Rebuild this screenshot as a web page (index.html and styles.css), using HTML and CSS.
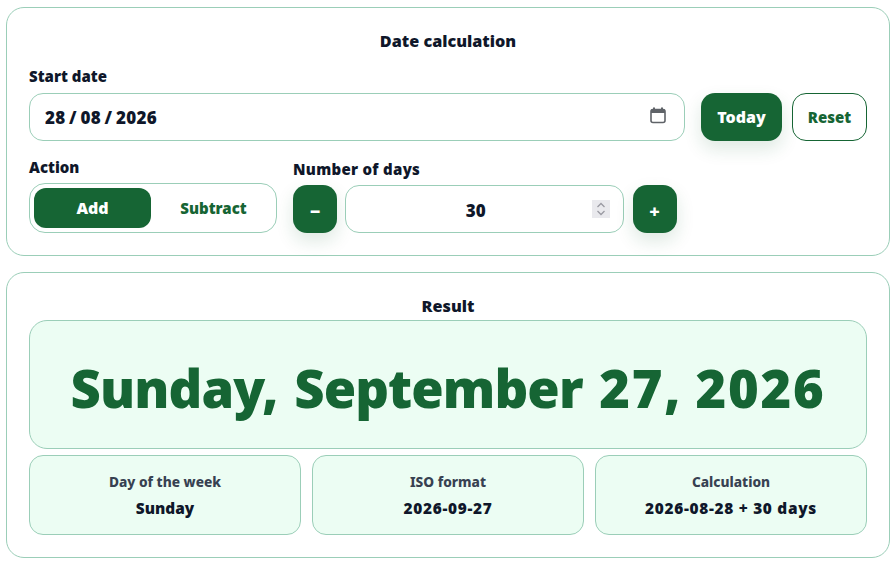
FILE: index.html
```html
<!DOCTYPE html>
<html lang="en">
<head>
    <meta charset="UTF-8">
    <title>Date calculation</title>
    <link rel="stylesheet" href="styles.css">
</head>
<body>
    <section class="card">
        <h2>Date calculation</h2>
        <label class="field-label">Start date</label>
        <div class="date-row">
            <div class="input date-input">
                <input class="plain date-text" type="text" value="28 / 08 / 2026" readonly>
                <svg class="cal" width="16" height="17" viewBox="0 0 16 17">
                    <path d="M4 0.5v3M12 0.5v3" stroke="#5f6368" stroke-width="2" fill="none"/>
                    <rect x="1" y="2.5" width="14" height="13" rx="2" fill="none" stroke="#5f6368" stroke-width="1.6"/>
                    <rect x="1" y="2.5" width="14" height="3.5" fill="#5f6368"/>
                </svg>
            </div>
            <button class="btn today">Today</button>
            <button class="btn reset">Reset</button>
        </div>
        <div class="calc-row">
            <div class="action">
                <label class="field-label">Action</label>
                <div class="segment">
                    <button class="seg on">Add</button>
                    <button class="seg">Subtract</button>
                </div>
            </div>
            <div class="days">
                <label class="field-label days-label">Number of days</label>
                <div class="stepper">
                    <button class="btn step">&minus;</button>
                    <div class="input num-input">
                        <input class="plain center" type="text" value="30" readonly>
                        <span class="spin">
                            <svg width="18" height="18" viewBox="0 0 18 18">
                                <path d="M5.5 7l3.5-3.5 3.5 3.5M5.5 11l3.5 3.5 3.5-3.5" stroke="#9a9aa2" stroke-width="1.3" fill="none"/>
                            </svg>
                        </span>
                    </div>
                    <button class="btn step">+</button>
                </div>
            </div>
        </div>
    </section>

    <section class="card result">
        <h2>Result</h2>
        <div class="big-date"><span>Sunday, September <span class="digits">27, 2026</span></span></div>
        <div class="tiles">
            <div class="tile">
                <div class="tile-label">Day of the week</div>
                <div class="tile-value">Sunday</div>
            </div>
            <div class="tile">
                <div class="tile-label">ISO format</div>
                <div class="tile-value digits-small">2026-09-27</div>
            </div>
            <div class="tile">
                <div class="tile-label">Calculation</div>
                <div class="tile-value digits-small">2026-08-28 + 30 days</div>
            </div>
        </div>
    </section>
</body>
</html>
```

FILE: styles.css
```css
* {
    box-sizing: border-box;
}
body {
    margin: 0;
    padding: 7px 5px 6px 6px;
    background: #fff;
    color: #0f172a;
    font-family: "Noto Sans", sans-serif;
    font-weight: 900;
}
.card {
    background: #fff;
    border: 1px solid #9bceb8;
    border-radius: 18px;
    padding: 22px;
    height: 249px;
}
.result {
    margin-top: 16px;
    height: 286px;
}
h2 {
    margin: 0;
    font-size: 16.2px;
    line-height: 22px;
    font-weight: 900;
    text-align: center;
}
.field-label {
    display: block;
    font-size: 15px;
    line-height: 20px;
}
.days-label {
    letter-spacing: 0.3px;
}
.card > .field-label {
    margin-top: 14px;
    margin-bottom: 7px;
}
.date-row {
    display: flex;
}
.input {
    display: flex;
    align-items: center;
    height: 48px;
    background: #fff;
    border: 1px solid #9bceb8;
    border-radius: 14px;
}
.date-input {
    flex: 1;
    padding: 0 18px 0 15px;
}
.plain {
    flex: 1;
    width: 0;
    min-width: 0;
    border: none;
    outline: none;
    background: none;
    padding: 0;
    color: #0f172a;
    font: inherit;
    font-size: 17px;
}
.date-text {
    word-spacing: -1px;
    letter-spacing: 0.25px;
}
.center {
    text-align: center;
}
.cal {
    margin-bottom: 4px;
}
.btn {
    height: 48px;
    border: none;
    border-radius: 14px;
    background: #166534;
    color: #fff;
    font: inherit;
    font-size: 16px;
    box-shadow: 0 8px 18px rgba(22, 101, 52, 0.14);
}
.today {
    width: 81px;
    margin-left: 16px;
}
.reset {
    width: 75px;
    margin-left: 10px;
    background: #fff;
    border: 1px solid #166534;
    color: #166534;
    font-size: 15px;
    box-shadow: none;
}
.calc-row {
    display: flex;
    align-items: flex-end;
    gap: 16px;
    margin-top: 16px;
}
.action {
    width: 248px;
}
.action .field-label {
    margin-bottom: 6px;
}
.days .field-label {
    margin-bottom: 6px;
}
.segment {
    display: flex;
    gap: 4px;
    height: 50px;
    padding: 4px;
    border: 1px solid #9bceb8;
    border-radius: 16px;
}
.seg {
    flex: 1;
    border: none;
    border-radius: 12px;
    background: none;
    color: #166534;
    font: inherit;
    font-size: 15px;
}
.seg.on {
    background: #166534;
    color: #fff;
    font-size: 16px;
}
.stepper {
    display: flex;
    gap: 8.4px;
    width: 383.6px;
}
.step {
    width: 44px;
    flex: none;
    padding-top: 4px;
    font-size: 18px;
}
.num-input {
    flex: 1;
    min-width: 0;
    padding: 0 13px 0 0;
}
.num-input .plain {
    padding: 2px 0 0 13px;
}
.spin {
    display: flex;
    width: 18px;
    height: 18px;
    background: #e9e9ed;
}
.big-date {
    display: flex;
    align-items: center;
    justify-content: center;
    height: 129px;
    margin-top: 3px;
    padding-top: 5px;
    background: #ecfdf3;
    border: 1px solid #9bceb8;
    border-radius: 18px;
    color: #166534;
    font-size: 52.5px;
    font-weight: 900;
    letter-spacing: -0.9px;
    word-spacing: 4px;
}
.digits {
    letter-spacing: 1.7px;
    word-spacing: -2px;
}
.tiles {
    display: grid;
    grid-template-columns: repeat(3, 1fr);
    gap: 11px;
    margin-top: 6px;
}
.tile {
    height: 80px;
    padding-top: 16px;
    background: #ecfdf3;
    border: 1px solid #9bceb8;
    border-radius: 14px;
    text-align: center;
}
.tile-label {
    color: #374151;
    font-size: 13.7px;
    line-height: 20px;
    font-weight: 800;
}
.tile-value {
    margin-top: 7px;
    font-size: 15.4px;
    line-height: 20px;
}
.digits-small {
    letter-spacing: 0.7px;
}
```
